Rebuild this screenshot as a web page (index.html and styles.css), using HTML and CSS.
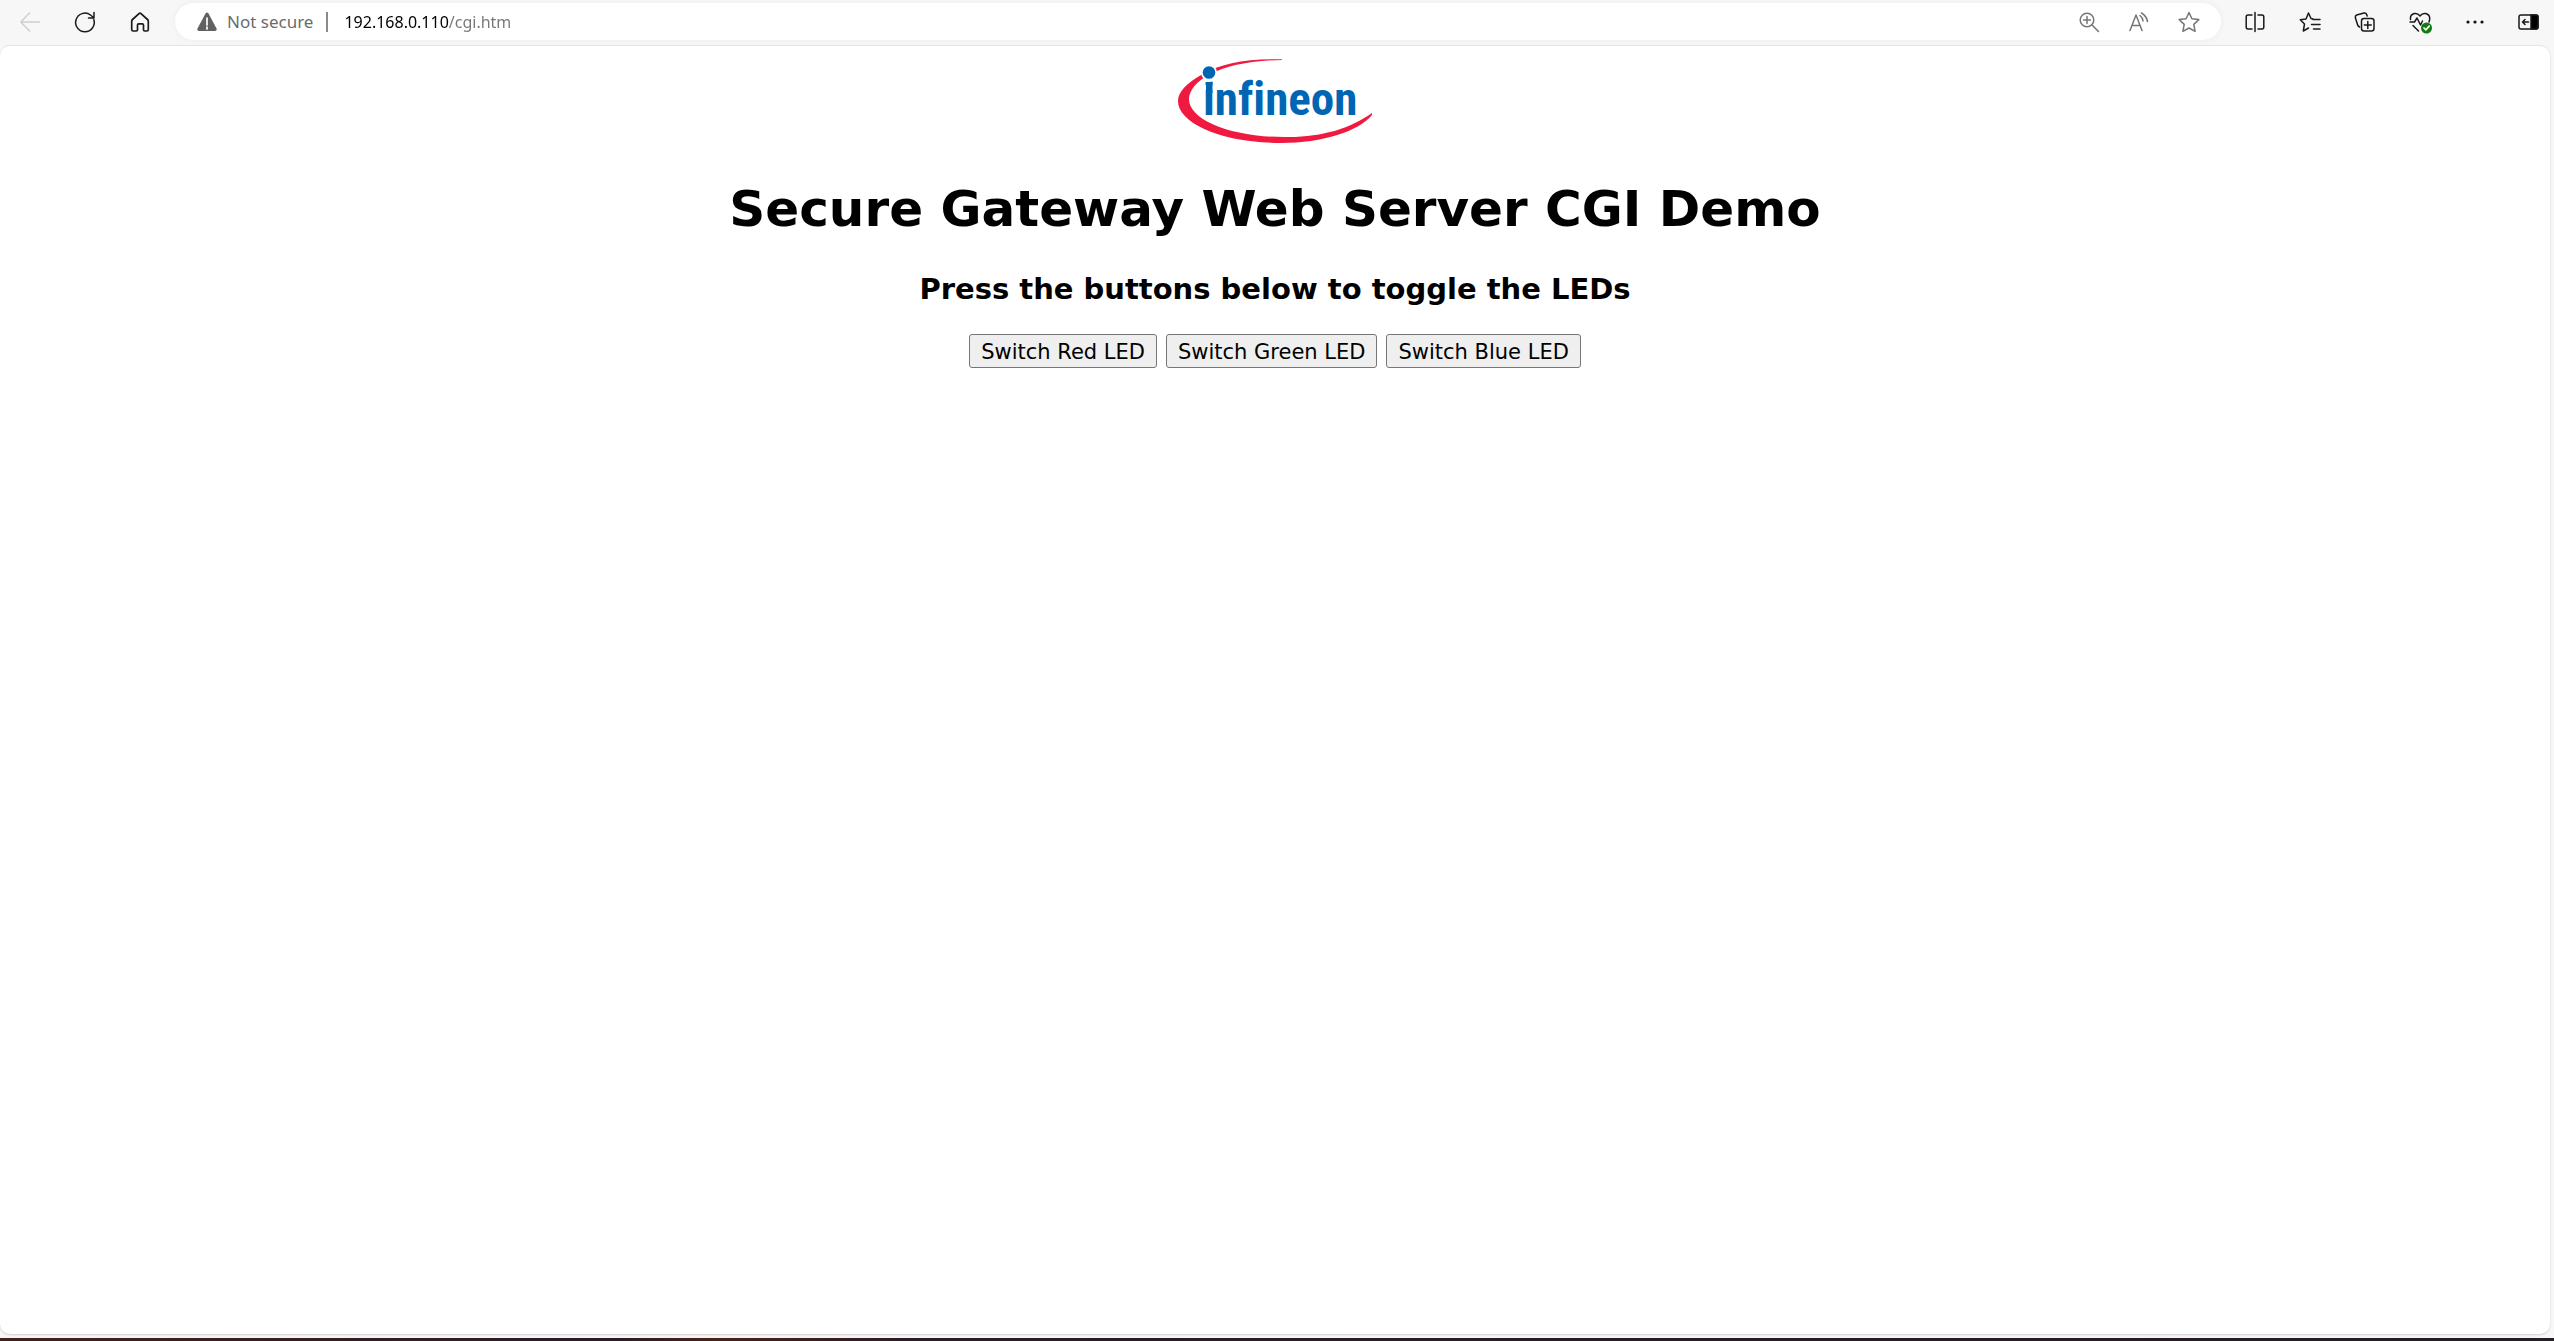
FILE: index.html
```html
<!DOCTYPE html>
<html lang="en">
<head>
<meta charset="utf-8">
<title>Secure Gateway Web Server CGI Demo</title>
<link rel="stylesheet" href="styles.css">
</head>
<body>
<header class="toolbar">
  <nav class="nav" aria-label="Navigation">
    <button class="tool" type="button" aria-label="Back" disabled>
      <svg width="24" height="24" viewBox="0 0 24 24"><path d="M21.500 12H3M11.500 3L2.800 12l8.700 9" stroke="#d0d0d0"/></svg>
    </button>
    <button class="tool" type="button" aria-label="Reload">
      <svg width="24" height="24" viewBox="0 0 24 24"><path d="M20.800 9.600A9.300 9.300 0 1 1 17.500 5L20.500 7.500M21 2.500v5.500h-5.500"/></svg>
    </button>
    <button class="tool" type="button" aria-label="Home">
      <svg width="24" height="24" viewBox="0 0 24 24"><path d="M3.700 11.200Q3.700 10.200 4.500 9.500L11 3.600q1-.9 2 0l6.500 5.900q.8.700.8 1.700v8.300q0 1.500-1.500 1.500h-2q-1.300 0-1.300-1.300V15q0-1.200-1.200-1.200h-3.600Q9.500 13.800 9.500 15v4.700q0 1.300-1.300 1.300H5.200q-1.500 0-1.500-1.500z" stroke-width="1.700"/></svg>
    </button>
  </nav>
  <div class="address">
    <button class="security" type="button">
      <svg width="20" height="20" viewBox="0 0 20 20"><path d="M8.500 1.500q1.500-2 3 0l8 15q.8 2.500-1.500 2.500H2q-2.300 0-1.500-2.500z" fill="#616161" stroke="none"/><path d="M10 6v7M10 15v2" stroke="#fff" stroke-width="1.700"/></svg>
      <span>Not secure</span>
    </button>
    <span class="divider"></span>
    <input class="url" type="text" aria-label="Address" value="192.168.0.110/cgi.htm" spellcheck="false">
    <div class="page-tools">
      <button class="mini" type="button" aria-label="Zoom">
        <svg width="24" height="24" viewBox="0 0 24 24"><circle cx="10" cy="10" r="6.800"/><path d="M15 15l6.500 6.500M6.500 10h7M10 6.500v7"/></svg>
      </button>
      <button class="mini" type="button" aria-label="Read aloud">
        <svg width="24" height="24" viewBox="0 0 24 24"><path d="M3 20.500L9 5l6 15.500M5.200 15.500h7.600M13 5.500q2.700 2 3 5.500M14.500 3q5 3 6 8.500"/></svg>
      </button>
      <button class="mini" type="button" aria-label="Add to favorites">
        <svg width="24" height="24" viewBox="0 0 24 24"><path d="M12 2.500l2.900 6.200 6.900.9-5 4.800 1.300 7L12 18l-6.100 3.400 1.300-7-5-4.800 6.900-.9z"/></svg>
      </button>
    </div>
  </div>
  <div class="browser-tools">
    <button class="tool" type="button" aria-label="Split screen">
      <svg width="24" height="24" viewBox="0 0 24 24"><path d="M9 5H5Q3.200 5 3.200 7v10q0 2 1.800 2h4M15 5h4q1.800 0 1.800 2v10q0 2-1.800 2h-4M12 2.500v19"/></svg>
    </button>
    <button class="tool" type="button" aria-label="Favorites">
      <svg width="24" height="24" viewBox="0 0 24 24"><path d="M15 9L13 8.500 10.500 3 8 9 2.300 9.800 6.500 14 5.300 21l5.200-3M15 9.500h7M13.500 14.500H22M15.500 19H22"/></svg>
    </button>
    <button class="tool" type="button" aria-label="Collections">
      <svg width="24" height="24" viewBox="0 0 24 24"><rect x="8.500" y="8.500" width="12.500" height="12.500" rx="2.500"/><path d="M14.800 11.500v7M11.300 15h7M6.500 17Q4.800 16 4.500 14.500L2.300 7.500Q2 5.700 3.700 5L11 3q2-.5 2.700 1.500l.5 1.500"/></svg>
    </button>
    <button class="tool" type="button" aria-label="Browser essentials">
      <svg width="24" height="24" viewBox="0 0 24 24"><path d="M2.500 9.500Q1.800 4.500 6.500 3.500q3.300-.5 5.500 2.500 2.200-3 5.500-2.500 4.700 1 4.200 6l-.7 2.500M2 12h4.500l2.500-4 3.500 7 2-4M5 15.500l5.500 5.500"/><circle cx="18.500" cy="18" r="5.500" fill="#107c10" stroke="none"/><path d="M16 18l1.800 1.800 3.400-3.600" stroke="#fff" stroke-width="1.700"/></svg>
    </button>
    <button class="tool" type="button" aria-label="Settings and more">
      <svg width="24" height="24" viewBox="0 0 24 24"><g fill="#111" stroke="none"><circle cx="5" cy="12" r="1.600"/><circle cx="12" cy="12" r="1.600"/><circle cx="19" cy="12" r="1.600"/></g></svg>
    </button>
    <button class="tool" type="button" aria-label="Sidebar">
      <svg width="24" height="24" viewBox="0 0 24 24"><rect x="1" y="5" width="19" height="14" rx="2"/><path d="M13 5h5q2 0 2 2v10q0 2-2 2h-5z" fill="#000"/><path d="M10.500 12h-6M7 9.500L4.500 12 7 14.500"/></svg>
    </button>
  </div>
</header>
<main class="page">
  <svg class="logo" width="194" height="84" viewBox="0 0 194 84" role="img" aria-label="Infineon">
    <path d="M104 .2C68-.5 43 4 23 16 8 25 0 33 0 42 0 64 43 84 103 84c42 0 78-12 91-28v-2c-21 15-49 24-83 24C56 79 11 62 11 40 12 22 41 2 104 1z" fill="#f0193f"/>
    <circle cx="31" cy="13.500" r="8" fill="#fff"/>
    <text class="wordmark" x="25" y="56">infineon</text>
    <path d="M25 14h12v9H25z" fill="#fff"/>
    <path d="M28 23.500l6.500-1V34H28z" fill="#0066b3"/>
    <circle cx="31" cy="13.500" r="6.300" fill="#0066b3"/>
  </svg>
  <h1>Secure Gateway Web Server CGI Demo</h1>
  <h2>Press the buttons below to toggle the LEDs</h2>
  <form class="leds">
    <button class="led" type="button">Switch Red LED</button>
    <button class="led" type="button">Switch Green LED</button>
    <button class="led" type="button">Switch Blue LED</button>
  </form>
</main>
<footer class="desktop-edge"></footer>
</body>
</html>
```
FILE: styles.css
```css
* { box-sizing: border-box; }

body {
  margin: 0;
  min-height: 100vh;
  display: flex;
  flex-direction: column;
  background: #f7f7f7;
  color: #000;
  font-family: Verdana, "DejaVu Sans", sans-serif;
}

button { font: inherit; color: inherit; }

svg {
  display: block;
  flex: none;
  fill: none;
  stroke: #1a1a1a;
  stroke-width: 1.5;
  stroke-linecap: round;
  stroke-linejoin: round;
}

.toolbar {
  height: 45px;
  padding: 0 0 2px 6px;
  display: flex;
  align-items: center;
  font-family: "Noto Sans", sans-serif;
  font-size: 17px;
}

.nav, .browser-tools { display: flex; gap: 7px; }

.tool, .mini, .security {
  display: flex;
  align-items: center;
  justify-content: center;
  padding: 0;
  border: 0;
  background: none;
}

.tool { width: 48px; height: 36px; }

.address {
  flex: 1;
  height: 37px;
  margin: 0 10px 0 11px;
  padding: 0 8px 0 22px;
  display: flex;
  align-items: center;
  border-radius: 19px;
  background: #fff;
  box-shadow: 0 0 6px #ececec;
}

.security { gap: 10px; color: #6b6b6b; }

.divider {
  width: 2px;
  height: 20px;
  margin: 0 16px 0 13px;
  background: #8a8a8a;
}

.url {
  flex: 1;
  padding: 0;
  border: 0;
  outline: 0;
  font: inherit;
  font-size: 16px;
  color: transparent;
  background: linear-gradient(to right, #000 105px, #767676 105px);
  background-clip: text;
}

.page-tools { display: flex; gap: 2px; }
.page-tools svg { stroke: #767676; }
.mini { width: 48px; height: 36px; }

.page {
  flex: 1;
  margin-right: 4px;
  padding: 13px 8px;
  display: flex;
  flex-direction: column;
  align-items: center;
  border-top: 1px solid #e6e6e6;
  border-radius: 10px;
  background: #fff;
  box-shadow: 0 1px 2px #cfcfcf;
}

.logo { stroke: none; }

.wordmark {
  font-family: "Liberation Sans Narrow", "Roboto Condensed", "DejaVu Sans Condensed", sans-serif;
  font-size: 47px;
  font-weight: 700;
  font-variant-ligatures: none;
  fill: #0066b3;
}

h1, h2 { margin: 0; font-weight: 700; }
h1 { margin-top: 36px; font-size: 50px; line-height: 60px; }
h2 { margin-top: 32px; font-size: 29px; line-height: 36px; }

.leds { margin-top: 27px; display: flex; gap: 9px; }

.led {
  height: 34px;
  padding: 2px 11px 0;
  border: 1px solid #767676;
  border-radius: 3px;
  background: #efefef;
  font-size: 21px;
  line-height: 30px;
}

.desktop-edge {
  height: 3px;
  margin-top: 4px;
  background: linear-gradient(to right, #45201c, #2c1b28 24%, #4d2018 28%, #2c1b28 36%, #241c26);
}
```
